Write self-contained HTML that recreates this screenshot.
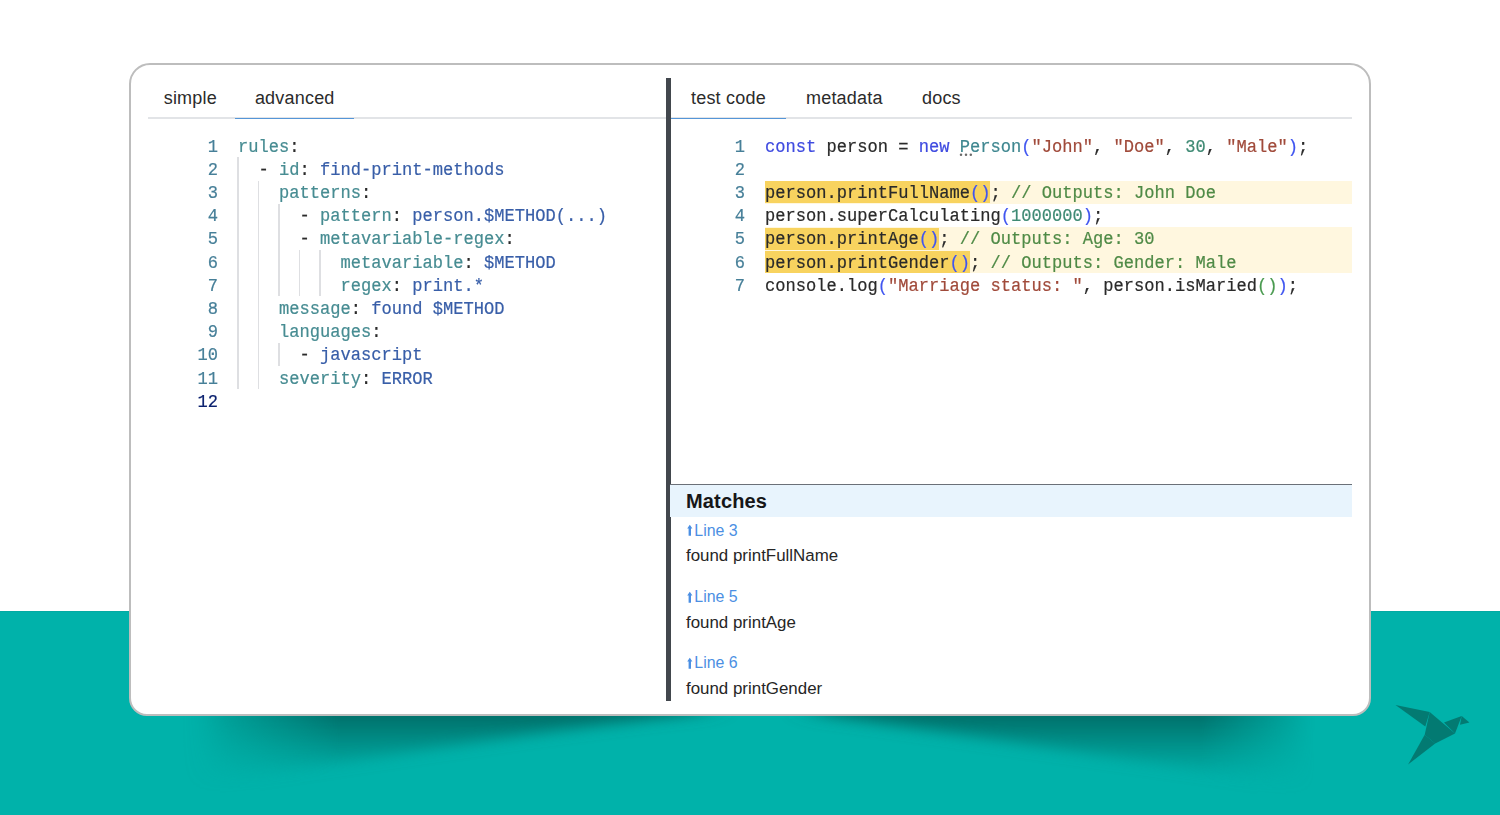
<!DOCTYPE html>
<html><head><meta charset="utf-8">
<style>
html,body{margin:0;padding:0;}
body{width:1500px;height:815px;position:relative;overflow:hidden;background:#fff;font-family:"Liberation Sans",sans-serif;}
.teal{position:absolute;left:0;top:611px;width:1500px;height:204px;background:#00b2aa;}
.shadow{position:absolute;background:#00605a;filter:blur(14px);}
.card{position:absolute;left:129px;top:63px;width:1238px;height:649px;border:2px solid #bdbdbd;border-radius:21px 21px 18px 18px;background:#fff;}
.abs{position:absolute;}
.tab{position:absolute;font-size:18px;letter-spacing:0.2px;color:#2b2b2b;white-space:pre;line-height:20px;}
.gl{position:absolute;height:2px;background:#e2e4e7;top:117px;}
.bl{position:absolute;height:1.6px;background:#5596d8;top:117.7px;}
.divider{position:absolute;left:666px;top:78px;width:5px;height:623px;background:#42474d;}
.code{position:absolute;font-family:"Liberation Mono",monospace;font-size:17.08px;white-space:pre;line-height:23.2px;height:23.2px;transform:scaleY(1.1);transform-origin:0 16.1px;-webkit-text-stroke:0.2px currentColor;}
.ln{position:absolute;font-family:"Liberation Mono",monospace;font-size:17.08px;white-space:pre;line-height:23.2px;color:#467f98;text-align:right;width:60px;transform:scaleY(1.1);transform-origin:0 16.1px;-webkit-text-stroke:0.2px currentColor;}
.ig{position:absolute;width:1.6px;background:#dedfe2;}
.k{color:#478c92}.v{color:#385ea8}.p{color:#2a2a2a}
.kw{color:#3f4be0}.s{color:#a04a3a}.n{color:#3f8a74}.c{color:#4f8a46}.cls{color:#3f8790}
.b1{color:#3f55f0}.b2{color:#4a9a50}
.lh{position:absolute;left:765px;width:587px;height:23.2px;background:#fff7df;}
.sh{position:absolute;left:765px;height:22.2px;background:#f8d35f;}
.m{position:absolute;font-size:16.6px;white-space:pre;line-height:20px;}
.link{color:#4b8fe3;font-size:15.9px;}
.found{color:#262626;font-size:16.9px;}
</style></head><body>
<div class="teal"></div><div class="abs" style="left:0;top:611px;width:1500px;height:1px;background:#02aaa3;"></div>
<svg class="abs" style="left:0;top:0" width="1500" height="815">
<defs>
<filter id="bl1" x="-20%" y="-100%" width="140%" height="300%"><feGaussianBlur stdDeviation="16 7"/></filter>
<linearGradient id="gl" gradientUnits="userSpaceOnUse" x1="0" y1="716" x2="0" y2="785"><stop offset="0" stop-color="#006c66" stop-opacity="0.95"/><stop offset="0.5" stop-color="#00807a" stop-opacity="0.55"/><stop offset="1" stop-color="#009a94" stop-opacity="0.05"/></linearGradient>
<linearGradient id="mgl" gradientUnits="userSpaceOnUse" x1="180" y1="0" x2="340" y2="0"><stop offset="0" stop-color="#fff" stop-opacity="0"/><stop offset="1" stop-color="#fff" stop-opacity="1"/></linearGradient>
<linearGradient id="mgr" gradientUnits="userSpaceOnUse" x1="1315" y1="0" x2="1200" y2="0"><stop offset="0" stop-color="#fff" stop-opacity="0"/><stop offset="1" stop-color="#fff" stop-opacity="1"/></linearGradient>
<mask id="ml" maskUnits="userSpaceOnUse" x="0" y="600" width="1500" height="215"><rect x="0" y="600" width="1500" height="215" fill="url(#mgl)"/></mask>
<mask id="mr" maskUnits="userSpaceOnUse" x="0" y="600" width="1500" height="215"><rect x="0" y="600" width="1500" height="215" fill="url(#mgr)"/></mask>
</defs>
<g mask="url(#ml)"><path d="M200,690 L705,690 L705,713 Q520,732 200,786 Z" fill="url(#gl)" filter="url(#bl1)"/></g>
<g mask="url(#mr)"><path d="M815,690 L1320,690 L1320,790 Q1060,748 815,714 Z" fill="url(#gl)" filter="url(#bl1)"/></g>
</svg>
<div class="card"></div>

<!-- left tabs -->
<div class="tab" style="left:163.7px;top:88px;">simple</div>
<div class="tab" style="left:254.9px;top:88px;">advanced</div>
<div class="gl" style="left:148px;width:518px;"></div>
<div class="bl" style="left:235px;width:119px;"></div>

<!-- right tabs -->
<div class="tab" style="left:691px;top:88px;">test code</div>
<div class="tab" style="left:806px;top:88px;">metadata</div>
<div class="tab" style="left:922px;top:88px;">docs</div>
<div class="gl" style="left:670px;width:682px;"></div>
<div class="bl" style="left:671px;width:115px;"></div>

<div class="divider"></div>

<div class="ig" style="left:237.40px;top:157.30px;height:232.00px"></div>
<div class="ig" style="left:257.90px;top:180.50px;height:208.80px"></div>
<div class="ig" style="left:278.39px;top:203.70px;height:92.80px"></div>
<div class="ig" style="left:278.39px;top:342.90px;height:23.20px"></div>
<div class="ig" style="left:298.89px;top:250.10px;height:46.40px"></div>
<div class="ig" style="left:319.38px;top:250.10px;height:46.40px"></div>
<div class="ln" style="left:158px;top:135.60px;color:#467f98">1</div>
<div class="code" style="left:238px;top:135.60px"><span class="k">rules</span><span class="p">:</span></div>
<div class="ln" style="left:158px;top:158.80px;color:#467f98">2</div>
<div class="code" style="left:238px;top:158.80px"><span class="p">  - </span><span class="k">id</span><span class="p">: </span><span class="v">find-print-methods</span></div>
<div class="ln" style="left:158px;top:182.00px;color:#467f98">3</div>
<div class="code" style="left:238px;top:182.00px"><span class="p">    </span><span class="k">patterns</span><span class="p">:</span></div>
<div class="ln" style="left:158px;top:205.20px;color:#467f98">4</div>
<div class="code" style="left:238px;top:205.20px"><span class="p">      - </span><span class="k">pattern</span><span class="p">: </span><span class="v">person.$METHOD(...)</span></div>
<div class="ln" style="left:158px;top:228.40px;color:#467f98">5</div>
<div class="code" style="left:238px;top:228.40px"><span class="p">      - </span><span class="k">metavariable-regex</span><span class="p">:</span></div>
<div class="ln" style="left:158px;top:251.60px;color:#467f98">6</div>
<div class="code" style="left:238px;top:251.60px"><span class="p">          </span><span class="k">metavariable</span><span class="p">: </span><span class="v">$METHOD</span></div>
<div class="ln" style="left:158px;top:274.80px;color:#467f98">7</div>
<div class="code" style="left:238px;top:274.80px"><span class="p">          </span><span class="k">regex</span><span class="p">: </span><span class="v">print.*</span></div>
<div class="ln" style="left:158px;top:298.00px;color:#467f98">8</div>
<div class="code" style="left:238px;top:298.00px"><span class="p">    </span><span class="k">message</span><span class="p">: </span><span class="v">found $METHOD</span></div>
<div class="ln" style="left:158px;top:321.20px;color:#467f98">9</div>
<div class="code" style="left:238px;top:321.20px"><span class="p">    </span><span class="k">languages</span><span class="p">:</span></div>
<div class="ln" style="left:158px;top:344.40px;color:#467f98">10</div>
<div class="code" style="left:238px;top:344.40px"><span class="p">      - </span><span class="v">javascript</span></div>
<div class="ln" style="left:158px;top:367.60px;color:#467f98">11</div>
<div class="code" style="left:238px;top:367.60px"><span class="p">    </span><span class="k">severity</span><span class="p">: </span><span class="v">ERROR</span></div>
<div class="ln" style="left:158px;top:390.80px;color:#0b216f">12</div>
<div class="lh" style="top:180.50px"></div>
<div class="sh" style="top:181.10px;width:225.46px"></div>
<div class="lh" style="top:226.90px"></div>
<div class="sh" style="top:227.50px;width:174.22px"></div>
<div class="lh" style="top:250.10px"></div>
<div class="sh" style="top:250.70px;width:204.96px"></div>
<div class="ln" style="left:685px;top:135.60px">1</div>
<div class="code" style="left:765px;top:135.60px"><span class="kw">const</span><span class="p"> person = </span><span class="kw">new</span><span class="p"> </span><span class="cls">Person</span><span class="b1">(</span><span class="s">"John"</span><span class="p">, </span><span class="s">"Doe"</span><span class="p">, </span><span class="n">30</span><span class="p">, </span><span class="s">"Male"</span><span class="b1">)</span><span class="p">;</span></div>
<div class="ln" style="left:685px;top:158.80px">2</div>
<div class="ln" style="left:685px;top:182.00px">3</div>
<div class="code" style="left:765px;top:182.00px"><span class="p">person.printFullName</span><span class="b1">()</span><span class="p">; </span><span class="c">// Outputs: John Doe</span></div>
<div class="ln" style="left:685px;top:205.20px">4</div>
<div class="code" style="left:765px;top:205.20px"><span class="p">person.superCalculating</span><span class="b1">(</span><span class="n">1000000</span><span class="b1">)</span><span class="p">;</span></div>
<div class="ln" style="left:685px;top:228.40px">5</div>
<div class="code" style="left:765px;top:228.40px"><span class="p">person.printAge</span><span class="b1">()</span><span class="p">; </span><span class="c">// Outputs: Age: 30</span></div>
<div class="ln" style="left:685px;top:251.60px">6</div>
<div class="code" style="left:765px;top:251.60px"><span class="p">person.printGender</span><span class="b1">()</span><span class="p">; </span><span class="c">// Outputs: Gender: Male</span></div>
<div class="ln" style="left:685px;top:274.80px">7</div>
<div class="code" style="left:765px;top:274.80px"><span class="p">console.log</span><span class="b1">(</span><span class="s">"Marriage status: "</span><span class="p">, person.isMaried</span><span class="b2">()</span><span class="b1">)</span><span class="p">;</span></div>

<!-- MATCHES -->
<div class="abs" style="left:670px;top:484px;width:682px;height:1px;background:#6b7078;"></div>
<div class="abs" style="left:670px;top:485px;width:682px;height:32px;background:#e8f4fd;"></div>
<div class="m" style="left:686px;top:490.5px;font-weight:bold;font-size:20px;letter-spacing:0.15px;color:#161618;">Matches</div>
<svg class="abs" style="left:686px;top:524.20px" width="8" height="13" viewBox="0 0 8 13"><path d="M1.2,4.4 L3.8,0.8 L6.4,4.4 L5,4.4 L5,11.8 L2.6,11.8 L2.6,4.4 Z" fill="#4b8fe3"/></svg>
<div class="m link" style="left:694.3px;top:520.60px;">Line 3</div>
<div class="m found" style="left:686px;top:546.35px;">found printFullName</div>
<svg class="abs" style="left:686px;top:590.50px" width="8" height="13" viewBox="0 0 8 13"><path d="M1.2,4.4 L3.8,0.8 L6.4,4.4 L5,4.4 L5,11.8 L2.6,11.8 L2.6,4.4 Z" fill="#4b8fe3"/></svg>
<div class="m link" style="left:694.3px;top:586.90px;">Line 5</div>
<div class="m found" style="left:686px;top:612.75px;">found printAge</div>
<svg class="abs" style="left:686px;top:656.70px" width="8" height="13" viewBox="0 0 8 13"><path d="M1.2,4.4 L3.8,0.8 L6.4,4.4 L5,4.4 L5,11.8 L2.6,11.8 L2.6,4.4 Z" fill="#4b8fe3"/></svg>
<div class="m link" style="left:694.3px;top:653.10px;">Line 6</div>
<div class="m found" style="left:686px;top:678.95px;">found printGender</div>
<svg class="abs" style="left:958px;top:152px" width="16" height="5"><circle cx="3" cy="2.8" r="1.25" fill="#6a6a6a"/><circle cx="8" cy="2.8" r="1.25" fill="#6a6a6a"/><circle cx="12.8" cy="2.8" r="1.25" fill="#6a6a6a"/></svg>
<svg class="abs" style="left:1380px;top:690px" width="100" height="90" viewBox="1380 690 100 90">
<g fill="#037a72">
<polygon points="1395.5,704.9 1429.7,712.1 1425.3,726.4"/>
<polygon points="1429.7,712.1 1455,733.6 1435.2,743.5 1424.7,734.7"/>
<polygon points="1424.7,734.7 1435.2,743.5 1408.1,764.5"/>
<polygon points="1444,722.6 1461.7,715.9 1455,733.6"/>
<polygon points="1461.7,715.9 1469.4,722.6 1460,724.8"/>
</g></svg>
</body></html>
